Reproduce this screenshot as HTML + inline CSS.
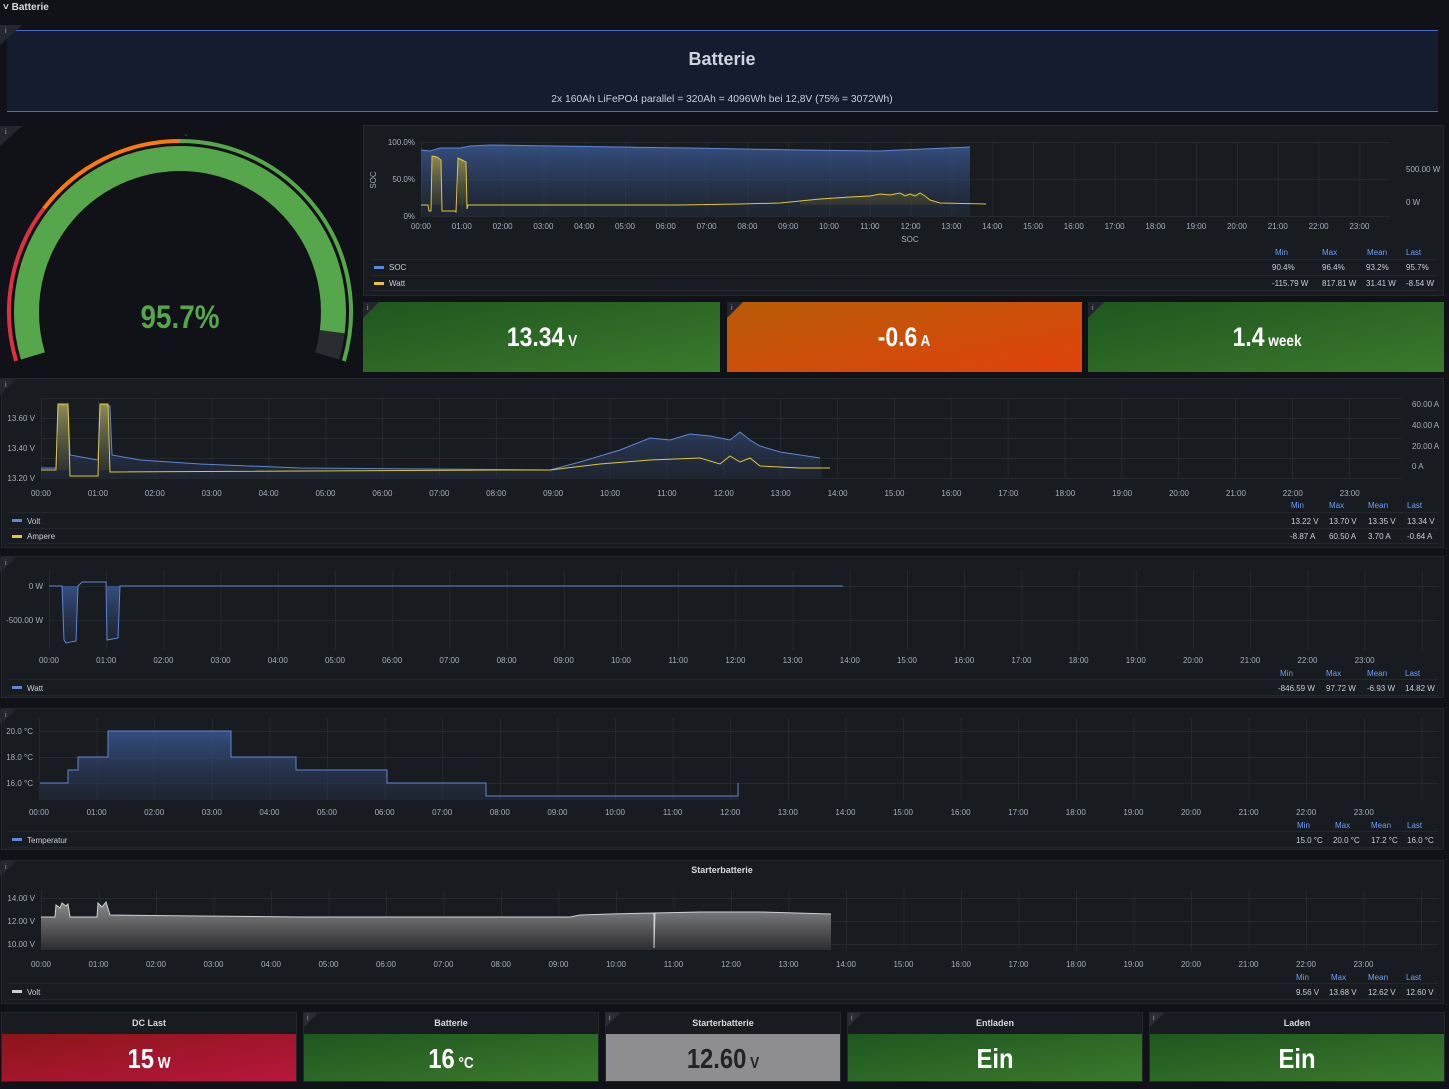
<!DOCTYPE html>
<html><head><meta charset="utf-8"><style>
html,body{margin:0;padding:0;background:#111217;width:1449px;height:1089px;overflow:hidden}
svg{display:block;font-family:"Liberation Sans",sans-serif}
.t{fill:#a8afba;font-size:8px}
.l{fill:#c9cfd8;font-size:8px}
.h{fill:#6e9fff;font-size:8px}
.ttl{fill:#d8d9da;font-size:9px;font-weight:bold;text-anchor:middle}
.sv{fill:#fff;font-weight:bold;text-anchor:middle;transform-box:fill-box;transform-origin:center;transform:scaleX(.85)}
.gv{transform-box:fill-box;transform-origin:center;transform:scaleX(.87)}
</style></head><body>
<svg width="1449" height="1089" viewBox="0 0 1449 1089">
<defs>
<linearGradient id="gb" x1="0" y1="0" x2="0" y2="1"><stop offset="0" stop-color="#3a5892" stop-opacity=".85"/><stop offset="1" stop-color="#2a3550" stop-opacity=".35"/></linearGradient>
<linearGradient id="gy" x1="0" y1="0" x2="0" y2="1"><stop offset="0" stop-color="#c9b43a" stop-opacity=".6"/><stop offset="1" stop-color="#5a5420" stop-opacity=".3"/></linearGradient>
<linearGradient id="gg" x1="0" y1="0" x2="0" y2="1"><stop offset="0" stop-color="#8a8a8a"/><stop offset="1" stop-color="#2b2c30"/></linearGradient>
<linearGradient id="green" x1="0" y1="0" x2="1" y2="1"><stop offset="0" stop-color="#1f561f"/><stop offset="1" stop-color="#3a7a2c"/></linearGradient>
<linearGradient id="orange" x1="0" y1="0" x2="1" y2="1"><stop offset="0" stop-color="#b65c06"/><stop offset="1" stop-color="#e2420d"/></linearGradient>
<linearGradient id="red" x1="0" y1="0" x2="1" y2="1"><stop offset="0" stop-color="#8b1519"/><stop offset="1" stop-color="#b8173d"/></linearGradient>
<pattern id="p1" patternUnits="userSpaceOnUse" x="421" y="0" width="40.8" height="10"><rect x="0" width="1" height="10" fill="#25282d"/></pattern>
<pattern id="p2" patternUnits="userSpaceOnUse" x="41" y="0" width="56.86" height="10"><rect x="0" width="1" height="10" fill="#25282d"/></pattern>
<pattern id="p3" patternUnits="userSpaceOnUse" x="49" y="0" width="57.2" height="10"><rect x="0" width="1" height="10" fill="#25282d"/></pattern>
<pattern id="p4" patternUnits="userSpaceOnUse" x="39" y="0" width="57.6" height="10"><rect x="0" width="1" height="10" fill="#25282d"/></pattern>
<pattern id="p5" patternUnits="userSpaceOnUse" x="41" y="0" width="57.5" height="10"><rect x="0" width="1" height="10" fill="#25282d"/></pattern>
</defs>

<text x="3" y="10" fill="#d8d9da" font-size="10" font-weight="bold">˅ Batterie</text>

<rect x="7" y="30" width="1431" height="82" fill="#151c30"/>
<rect x="7" y="30" width="1431" height="1" fill="#4b6bd2"/>
<rect x="7" y="111" width="1431" height="1" fill="#4b6bd2"/>
<path d="M0 25 H22 L0 45 Z" fill="#24272e"/><text x="5" y="33" fill="#aaa" font-size="7">i</text>
<text x="722" y="65" fill="#d0d4dc" font-size="18" font-weight="bold" text-anchor="middle">Batterie</text>
<text x="722" y="102" fill="#c9cfd8" font-size="10.3" text-anchor="middle">2x 160Ah LiFePO4 parallel = 320Ah = 4096Wh bei 12,8V (75% = 3072Wh)</text>

<path d="M0 126 H22 L0 146 Z" fill="#24272e"/><text x="5" y="134" fill="#aaa" font-size="7">i</text>
<path d="M16.1 360.9 A171 171 0 0 1 43.8 208.6" stroke="#e02f44" stroke-width="4" fill="none"/>
<path d="M43.8 208.6 A171 171 0 0 1 180 141" stroke="#ff780a" stroke-width="4" fill="none"/>
<path d="M180 141 A171 171 0 0 1 343.9 360.9" stroke="#56a64b" stroke-width="4" fill="none"/>
<path d="M32.9 355.9 A153.5 153.5 0 1 1 332.2 331.8" stroke="#56a64b" stroke-width="25" fill="none"/>
<path d="M332.2 331.8 A153.5 153.5 0 0 1 327.1 355.9" stroke="#2a2c31" stroke-width="25" fill="none"/>
<text x="186" y="140" fill="#888" font-size="7" text-anchor="middle">ˇ</text>
<text class="gv" x="180" y="328" fill="#56a64b" font-size="32" font-weight="bold" text-anchor="middle">95.7%</text>

<rect x="363.5" y="125.5" width="1080" height="170" fill="#181b1f" stroke="#24272c"/>
<rect x="421" y="142" width="969" height="74" fill="url(#p1)"/>
<path d="M421 142.5H1390M421 179.5H1390M421 216.5H1390" stroke="#25282d"/>
<path d="M421 216 L421 150 L430 151 L440 148 L460 148 L470 146 L490 145 L620 147 L690 148 L800 150 L880 151 L900 150 L970 147 L970 216 Z" fill="url(#gb)"/>
<path d="M421 150 L430 151 L440 148 L460 148 L470 146 L490 145 L620 147 L690 148 L800 150 L880 151 L900 150 L970 147" stroke="#5f86d4" fill="none"/>
<path d="M432 205 L432 156 L437 157 L441 160 L442 205 Z M458 205 L458 158 L462 160 L466 162 L467 205 Z M800 205 L800 201 L850 197 L880 194 L900 193 L920 194 L930 200 L940 205 Z" fill="url(#gy)"/>
<path d="M421 205 L428 205 L429 211 L431 211 L432 156 L437 157 L441 160 L442 211 L455 211 L456 212 L458 158 L462 160 L466 162 L467 209 L468 205 L680 205 L740 204 L780 203 L800 201 L820 199 L850 197 L870 196 L880 194 L890 195 L900 193 L905 196 L910 194 L915 196 L920 193 L925 196 L930 200 L940 203 L986 204" stroke="#e0c834" fill="none"/>
<g class="t" text-anchor="end"><text x="415" y="145">100.0%</text><text x="415" y="182">50.0%</text><text x="415" y="219">0%</text></g>
<text class="t" transform="translate(376,180) rotate(-90)" text-anchor="middle">SOC</text>
<g class="t"><text x="1406" y="172">500.00 W</text><text x="1406" y="205">0 W</text></g>
<g class="t" text-anchor="middle"><text x="421" y="229">00:00</text><text x="461.8" y="229">01:00</text><text x="502.6" y="229">02:00</text><text x="543.4" y="229">03:00</text><text x="584.2" y="229">04:00</text><text x="625" y="229">05:00</text><text x="665.8" y="229">06:00</text><text x="706.6" y="229">07:00</text><text x="747.4" y="229">08:00</text><text x="788.2" y="229">09:00</text><text x="829" y="229">10:00</text><text x="869.8" y="229">11:00</text><text x="910.6" y="229">12:00</text><text x="951.4" y="229">13:00</text><text x="992.2" y="229">14:00</text><text x="1033" y="229">15:00</text><text x="1073.8" y="229">16:00</text><text x="1114.6" y="229">17:00</text><text x="1155.4" y="229">18:00</text><text x="1196.2" y="229">19:00</text><text x="1237" y="229">20:00</text><text x="1277.8" y="229">21:00</text><text x="1318.6" y="229">22:00</text><text x="1359.4" y="229">23:00</text><text x="910" y="242">SOC</text></g>
<path d="M370 259.5H1438M370 275.5H1438M370 290.5H1438" stroke="#24272c"/>
<g class="h"><text x="1275" y="255">Min</text><text x="1322" y="255">Max</text><text x="1367" y="255">Mean</text><text x="1406" y="255">Last</text></g>
<rect x="374" y="266" width="10" height="3" fill="#5f86d4"/><rect x="374" y="282" width="10" height="3" fill="#e0c834"/>
<g class="l"><text x="389" y="270">SOC</text><text x="389" y="286">Watt</text>
<text x="1272" y="270">90.4%</text><text x="1322" y="270">96.4%</text><text x="1366" y="270">93.2%</text><text x="1406" y="270">95.7%</text>
<text x="1272" y="286">-115.79 W</text><text x="1322" y="286">817.81 W</text><text x="1366" y="286">31.41 W</text><text x="1406" y="286">-8.54 W</text></g>

<rect x="363" y="302" width="357" height="70" fill="url(#green)"/>
<rect x="727" y="302" width="355" height="70" fill="url(#orange)"/>
<rect x="1088" y="302" width="356" height="70" fill="url(#green)"/>
<path d="M363 302H379L363 318Z M727 302H743L727 318Z M1088 302H1104L1088 318Z" fill="#22252b"/>
<g fill="#aaa" font-size="7"><text x="367" y="310">i</text><text x="731" y="310">i</text><text x="1092" y="310">i</text></g>
<text class="sv" x="542" y="346" font-size="27">13.34<tspan font-size="16"> V</tspan></text>
<text class="sv" x="904" y="346" font-size="27">-0.6<tspan font-size="16"> A</tspan></text>
<text class="sv" x="1267" y="346" font-size="27">1.4<tspan font-size="16"> week</tspan></text>

<rect x="1.5" y="378.5" width="1442" height="169" fill="#181b1f" stroke="#24272c"/>
<path d="M0 379H16L0 395Z" fill="#24272e"/><text x="5" y="387" fill="#aaa" font-size="7">i</text>
<rect x="41" y="398" width="1360" height="80" fill="url(#p2)"/>
<path d="M41 398.5H1401M41 418.5H1401M41 438.5H1401M41 458.5H1401M41 478.5H1401" stroke="#25282d"/>
<path d="M41 478 L41 468 L56 468 L58 404 L68 406 L70 455 L98 460 L100 404 L110 406 L112 455 L140 460 L200 464 L300 468 L550 470 L580 462 L620 450 L650 438 L670 440 L690 434 L710 436 L730 440 L740 432 L750 440 L760 446 L780 452 L820 458 L822 478 Z" fill="url(#gb)"/>
<path d="M41 468 L56 468 L58 404 L68 406 L70 455 L98 460 L100 404 L110 406 L112 455 L140 460 L200 464 L300 468 L550 470 L580 462 L620 450 L650 438 L670 440 L690 434 L710 436 L730 440 L740 432 L750 440 L760 446 L780 452 L820 458" stroke="#5f86d4" fill="none"/>
<path d="M58 470 L58 404 L68 404 L70 470Z M100 470 L100 404 L108 404 L110 470Z" fill="url(#gy)"/>
<path d="M41 470 L56 470 L58 404 L68 404 L70 476 L98 476 L100 404 L108 404 L110 472 L500 470 L550 470 L600 464 L650 460 L700 458 L720 464 L730 456 L740 462 L750 458 L760 466 L800 468 L830 468" stroke="#e0c834" fill="none"/>
<g class="t" text-anchor="end"><text x="35" y="421">13.60 V</text><text x="35" y="451">13.40 V</text><text x="35" y="481">13.20 V</text></g>
<g class="t"><text x="1412" y="407">60.00 A</text><text x="1412" y="428">40.00 A</text><text x="1412" y="449">20.00 A</text><text x="1412" y="469">0 A</text></g>
<g class="t" text-anchor="middle"><text x="41" y="496">00:00</text><text x="97.9" y="496">01:00</text><text x="154.8" y="496">02:00</text><text x="211.7" y="496">03:00</text><text x="268.6" y="496">04:00</text><text x="325.5" y="496">05:00</text><text x="382.4" y="496">06:00</text><text x="439.3" y="496">07:00</text><text x="496.2" y="496">08:00</text><text x="553.1" y="496">09:00</text><text x="610" y="496">10:00</text><text x="666.9" y="496">11:00</text><text x="723.8" y="496">12:00</text><text x="780.7" y="496">13:00</text><text x="837.6" y="496">14:00</text><text x="894.5" y="496">15:00</text><text x="951.4" y="496">16:00</text><text x="1008.3" y="496">17:00</text><text x="1065.2" y="496">18:00</text><text x="1122.1" y="496">19:00</text><text x="1179" y="496">20:00</text><text x="1235.9" y="496">21:00</text><text x="1292.8" y="496">22:00</text><text x="1349.7" y="496">23:00</text></g>
<path d="M8 512.5H1438M8 528.5H1438M8 543.5H1438" stroke="#24272c"/>
<g class="h"><text x="1291" y="508">Min</text><text x="1329" y="508">Max</text><text x="1368" y="508">Mean</text><text x="1407" y="508">Last</text></g>
<rect x="12" y="519" width="10" height="3" fill="#5f86d4"/><rect x="12" y="535" width="10" height="3" fill="#e0c834"/>
<g class="l"><text x="27" y="524">Volt</text><text x="27" y="539">Ampere</text>
<text x="1291" y="524">13.22 V</text><text x="1329" y="524">13.70 V</text><text x="1368" y="524">13.35 V</text><text x="1407" y="524">13.34 V</text>
<text x="1290" y="539">-8.87 A</text><text x="1329" y="539">60.50 A</text><text x="1368" y="539">3.70 A</text><text x="1407" y="539">-0.64 A</text></g>

<rect x="1.5" y="556.5" width="1442" height="141" fill="#181b1f" stroke="#24272c"/>
<path d="M0 557H16L0 573Z" fill="#24272e"/><text x="5" y="565" fill="#aaa" font-size="7">i</text>
<rect x="49" y="570" width="1390" height="80" fill="url(#p3)"/>
<path d="M49 586.5H1439M49 620.5H1439" stroke="#25282d"/>
<path d="M62 586 L64 640 L66 643 L76 641 L78 586Z M107 586 L107 640 L118 638 L120 586Z" fill="url(#gb)"/>
<path d="M49 586 L62 586 L64 640 L66 643 L76 641 L78 586 L82 582 L106 582 L107 640 L118 638 L120 586 L843 586" stroke="#5f86d4" fill="none"/>
<g class="t" text-anchor="end"><text x="43" y="589">0 W</text><text x="43" y="623">-500.00 W</text></g>
<g class="t" text-anchor="middle"><text x="49" y="663">00:00</text><text x="106.2" y="663">01:00</text><text x="163.4" y="663">02:00</text><text x="220.6" y="663">03:00</text><text x="277.8" y="663">04:00</text><text x="335" y="663">05:00</text><text x="392.2" y="663">06:00</text><text x="449.4" y="663">07:00</text><text x="506.6" y="663">08:00</text><text x="563.8" y="663">09:00</text><text x="621" y="663">10:00</text><text x="678.2" y="663">11:00</text><text x="735.4" y="663">12:00</text><text x="792.6" y="663">13:00</text><text x="849.8" y="663">14:00</text><text x="907" y="663">15:00</text><text x="964.2" y="663">16:00</text><text x="1021.4" y="663">17:00</text><text x="1078.6" y="663">18:00</text><text x="1135.8" y="663">19:00</text><text x="1193" y="663">20:00</text><text x="1250.2" y="663">21:00</text><text x="1307.4" y="663">22:00</text><text x="1364.6" y="663">23:00</text></g>
<path d="M8 679.5H1438M8 695.5H1438" stroke="#24272c"/>
<g class="h"><text x="1280" y="676">Min</text><text x="1326" y="676">Max</text><text x="1367" y="676">Mean</text><text x="1405" y="676">Last</text></g>
<rect x="12" y="686" width="10" height="3" fill="#5f86d4"/>
<g class="l"><text x="27" y="691">Watt</text><text x="1278" y="691">-846.59 W</text><text x="1326" y="691">97.72 W</text><text x="1367" y="691">-6.93 W</text><text x="1405" y="691">14.82 W</text></g>

<rect x="1.5" y="708.5" width="1442" height="141" fill="#181b1f" stroke="#24272c"/>
<path d="M0 709H16L0 725Z" fill="#24272e"/><text x="5" y="717" fill="#aaa" font-size="7">i</text>
<rect x="39" y="718" width="1400" height="82" fill="url(#p4)"/>
<path d="M39 731.5H1439M39 757.5H1439M39 783.5H1439" stroke="#25282d"/>
<path d="M40 800 L40 783 L68 783 L68 770 L78 770 L78 757 L108 757 L108 731 L231 731 L231 757 L296 757 L296 770 L387 770 L387 783 L486 783 L486 796 L738 796 L738 783 L739 800 Z" fill="url(#gb)"/>
<path d="M40 783 L68 783 L68 770 L78 770 L78 757 L108 757 L108 731 L231 731 L231 757 L296 757 L296 770 L387 770 L387 783 L486 783 L486 796 L738 796 L738 783" stroke="#5f86d4" fill="none"/>
<g class="t" text-anchor="end"><text x="33" y="734">20.0 °C</text><text x="33" y="760">18.0 °C</text><text x="33" y="786">16.0 °C</text></g>
<g class="t" text-anchor="middle"><text x="39" y="815">00:00</text><text x="96.6" y="815">01:00</text><text x="154.2" y="815">02:00</text><text x="211.8" y="815">03:00</text><text x="269.4" y="815">04:00</text><text x="327" y="815">05:00</text><text x="384.6" y="815">06:00</text><text x="442.2" y="815">07:00</text><text x="499.8" y="815">08:00</text><text x="557.4" y="815">09:00</text><text x="615" y="815">10:00</text><text x="672.6" y="815">11:00</text><text x="730.2" y="815">12:00</text><text x="787.8" y="815">13:00</text><text x="845.4" y="815">14:00</text><text x="903" y="815">15:00</text><text x="960.6" y="815">16:00</text><text x="1018.2" y="815">17:00</text><text x="1075.8" y="815">18:00</text><text x="1133.4" y="815">19:00</text><text x="1191" y="815">20:00</text><text x="1248.6" y="815">21:00</text><text x="1306.2" y="815">22:00</text><text x="1363.8" y="815">23:00</text></g>
<path d="M8 831.5H1438M8 847.5H1438" stroke="#24272c"/>
<g class="h"><text x="1297" y="828">Min</text><text x="1335" y="828">Max</text><text x="1371" y="828">Mean</text><text x="1407" y="828">Last</text></g>
<rect x="12" y="838" width="10" height="3" fill="#5f86d4"/>
<g class="l"><text x="27" y="843">Temperatur</text><text x="1296" y="843">15.0 °C</text><text x="1333" y="843">20.0 °C</text><text x="1371" y="843">17.2 °C</text><text x="1407" y="843">16.0 °C</text></g>

<rect x="1.5" y="860.5" width="1442" height="143" fill="#181b1f" stroke="#24272c"/>
<path d="M0 861H16L0 877Z" fill="#24272e"/><text x="5" y="869" fill="#aaa" font-size="7">i</text>
<text class="ttl" x="722" y="873">Starterbatterie</text>
<rect x="41" y="890" width="1398" height="60" fill="url(#p5)"/>
<path d="M41 898.5H1439M41 921.5H1439M41 944.5H1439" stroke="#25282d"/>
<path d="M41 950 L41 917 L55 917 L56 905 L60 908 L62 903 L66 906 L68 904 L70 917 L97 917 L98 903 L102 907 L106 902 L110 915 L200 916 L300 917 L570 917 L580 915 L610 914 L654 913 L655 913 L700 912 L760 912 L831 914 L831 950 Z" fill="url(#gg)"/>
<path d="M41 917 L55 917 L56 905 L60 908 L62 903 L66 906 L68 904 L70 917 L97 917 L98 903 L102 907 L106 902 L110 915 L200 916 L300 917 L570 917 L580 915 L610 914 L654 913 L654 948 L655 913 L700 912 L760 912 L831 914" stroke="#d0d0d0" fill="none"/>
<g class="t" text-anchor="end"><text x="35" y="901">14.00 V</text><text x="35" y="924">12.00 V</text><text x="35" y="947">10.00 V</text></g>
<g class="t" text-anchor="middle"><text x="41" y="967">00:00</text><text x="98.5" y="967">01:00</text><text x="156" y="967">02:00</text><text x="213.5" y="967">03:00</text><text x="271" y="967">04:00</text><text x="328.5" y="967">05:00</text><text x="386" y="967">06:00</text><text x="443.5" y="967">07:00</text><text x="501" y="967">08:00</text><text x="558.5" y="967">09:00</text><text x="616" y="967">10:00</text><text x="673.5" y="967">11:00</text><text x="731" y="967">12:00</text><text x="788.5" y="967">13:00</text><text x="846" y="967">14:00</text><text x="903.5" y="967">15:00</text><text x="961" y="967">16:00</text><text x="1018.5" y="967">17:00</text><text x="1076" y="967">18:00</text><text x="1133.5" y="967">19:00</text><text x="1191" y="967">20:00</text><text x="1248.5" y="967">21:00</text><text x="1306" y="967">22:00</text><text x="1363.5" y="967">23:00</text></g>
<path d="M8 983.5H1438M8 999.5H1438" stroke="#24272c"/>
<g class="h"><text x="1296" y="980">Min</text><text x="1331" y="980">Max</text><text x="1368" y="980">Mean</text><text x="1406" y="980">Last</text></g>
<rect x="12" y="990" width="10" height="3" fill="#cccccc"/>
<g class="l"><text x="27" y="995">Volt</text><text x="1296" y="995">9.56 V</text><text x="1329" y="995">13.68 V</text><text x="1368" y="995">12.62 V</text><text x="1406" y="995">12.60 V</text></g>

<g fill="#181b1f" stroke="#24272c"><rect x="1.5" y="1012.5" width="295" height="69"/><rect x="303.5" y="1012.5" width="295" height="69"/><rect x="605.5" y="1012.5" width="235" height="69"/><rect x="847.5" y="1012.5" width="295" height="69"/><rect x="1149.5" y="1012.5" width="295" height="69"/></g>
<rect x="2" y="1034" width="294" height="47" fill="url(#red)"/>
<rect x="304" y="1034" width="294" height="47" fill="url(#green)"/>
<rect x="606" y="1034" width="234" height="47" fill="#8e8e90"/>
<rect x="848" y="1034" width="294" height="47" fill="url(#green)"/>
<rect x="1150" y="1034" width="294" height="47" fill="url(#green)"/>
<path d="M304 1013H318L304 1027Z M606 1013H620L606 1027Z M848 1013H862L848 1027Z M1150 1013H1164L1150 1027Z" fill="#2a2d33"/>
<g fill="#aaa" font-size="7"><text x="307" y="1020">i</text><text x="609" y="1020">i</text><text x="851" y="1020">i</text><text x="1153" y="1020">i</text></g>
<g class="ttl"><text x="149" y="1026">DC Last</text><text x="451" y="1026">Batterie</text><text x="723" y="1026">Starterbatterie</text><text x="995" y="1026">Entladen</text><text x="1297" y="1026">Laden</text></g>
<text class="sv" x="149" y="1068" font-size="28">15<tspan font-size="16"> W</tspan></text>
<text class="sv" x="451" y="1068" font-size="28">16<tspan font-size="16"> °C</tspan></text>
<text class="sv" x="723" y="1068" font-size="28" style="fill:#222326">12.60<tspan font-size="16"> V</tspan></text>
<text class="sv" x="995" y="1068" font-size="28">Ein</text>
<text class="sv" x="1297" y="1068" font-size="28">Ein</text>
</svg>
</body></html>
